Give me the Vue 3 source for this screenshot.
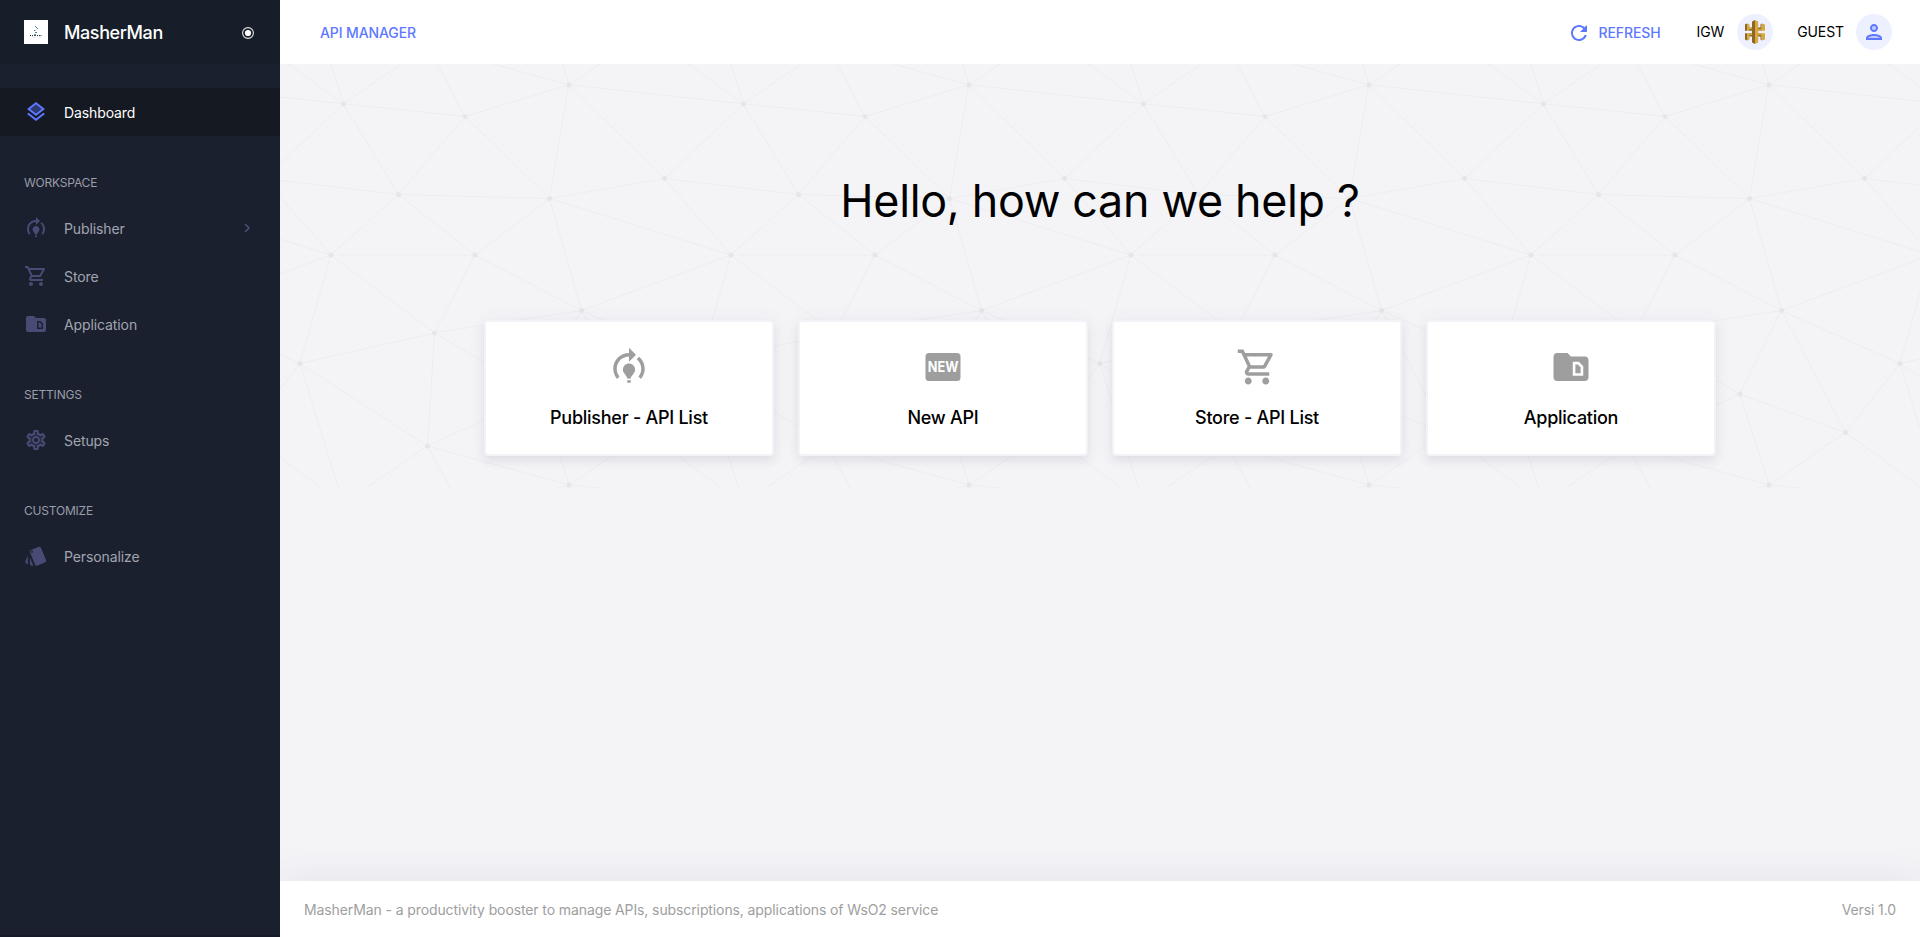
<script setup>
import { h } from 'vue'

const paths = {
  training:
    'M15.5,13.5c0,2-2.5,3.5-2.5,5h-2c0-1.5-2.5-3-2.5-5c0-1.93,1.57-3.5,3.5-3.5h0C13.93,10,15.5,11.57,15.5,13.5z M13,19.5h-2V21h2V19.5z M19,13c0,1.68-0.59,3.21-1.58,4.42l1.42,1.42C20.18,17.27,21,15.23,21,13c0-2.74-1.23-5.19-3.16-6.84l-1.42,1.42C17.99,8.86,19,10.82,19,13z M16,5l-4-4v3c-4.97,0-9,4.03-9,9c0,2.23,0.82,4.27,2.16,5.84l1.42-1.42C5.59,16.21,5,14.68,5,13c0-3.86,3.14-7,7-7v3L16,5z',
  layers:
    'M12 18.54l-7.37-5.73L3 14.07l9 7 9-7-1.63-1.27zM12 16l7.36-5.73L21 9l-9-7-9 7 1.63 1.27L12 16zm0-11.47L17.74 9 12 13.47 6.26 9 12 4.53z',
  cart:
    'M15.55 13c.75 0 1.41-.41 1.75-1.03l3.58-6.49c.37-.66-.11-1.48-.87-1.48H5.21l-.94-2H1v2h2l3.6 7.59-1.35 2.44C4.52 15.37 5.48 17 7 17h12v-2H7l1.1-2h7.45zM6.16 6h12.15l-2.76 5H8.53L6.16 6zM7 18c-1.1 0-1.99.9-1.99 2S5.9 22 7 22s2-.9 2-2-.9-2-2-2zm10 0c-1.1 0-1.99.9-1.99 2s.89 2 1.99 2 2-.9 2-2-.9-2-2-2z',
  folder:
    'M20,6h-8l-2-2H4C2.9,4,2.01,4.9,2.01,6L2,18c0,1.1,0.9,2,2,2h16c1.1,0,2-0.9,2-2V8C22,6.9,21.1,6,20,6z M17.5,12.12v3.38l-3,0v-5h1.38L17.5,12.12z M13,9v8l6,0v-5.5L16.5,9H13z',
  gear:
    'M19.43 12.98c.04-.32.07-.64.07-.98s-.03-.66-.07-.98l2.11-1.65c.19-.15.24-.42.12-.64l-2-3.46c-.09-.16-.26-.25-.44-.25-.06 0-.12.01-.17.03l-2.49 1c-.52-.4-1.08-.73-1.69-.98l-.38-2.65C14.46 2.18 14.25 2 14 2h-4c-.25 0-.46.18-.49.42l-.38 2.65c-.61.25-1.17.59-1.69.98l-2.49-1c-.06-.02-.12-.03-.18-.03-.17 0-.34.09-.43.25l-2 3.46c-.13.22-.07.49.12.64l2.11 1.65c-.04.32-.07.65-.07.98s.03.66.07.98l-2.11 1.65c-.19.15-.24.42-.12.64l2 3.46c.09.16.26.25.44.25.06 0 .12-.01.17-.03l2.49-1c.52.4 1.08.73 1.69.98l.38 2.65c.03.24.24.42.49.42h4c.25 0 .46-.18.49-.42l.38-2.65c.61-.25 1.17-.59 1.69-.98l2.49 1c.06.02.12.03.18.03.17 0 .34-.09.43-.25l2-3.46c.12-.22.07-.49-.12-.64l-2.11-1.65zm-1.98-1.71c.04.31.05.52.05.73 0 .21-.02.43-.05.73l-.14 1.13.89.7 1.08.84-.7 1.21-1.27-.51-1.04-.42-.9.68c-.43.32-.84.56-1.25.73l-1.06.43-.16 1.13-.2 1.35h-1.4l-.19-1.35-.16-1.13-1.06-.43c-.43-.18-.83-.41-1.23-.71l-.91-.7-1.06.43-1.27.51-.7-1.21 1.08-.84.89-.7-.14-1.13c-.03-.31-.05-.54-.05-.74s.02-.43.05-.73l.14-1.13-.89-.7-1.08-.84.7-1.21 1.27.51 1.04.42.9-.68c.43-.32.84-.56 1.25-.73l1.06-.43.16-1.13.2-1.35h1.39l.19 1.35.16 1.13 1.06.43c.43.18.83.41 1.23.71l.91.7 1.06-.43 1.27-.51.7 1.21-1.07.85-.89.7.14 1.13zM12 8c-2.21 0-4 1.79-4 4s1.79 4 4 4 4-1.79 4-4-1.79-4-4-4zm0 6c-1.1 0-2-.9-2-2s.9-2 2-2 2 .9 2 2-.9 2-2 2z',
  style:
    'M2.53 19.65l1.34.56v-9.03l-2.43 5.86c-.41 1.02.08 2.19 1.09 2.61zm19.5-3.7L17.07 3.98c-.31-.75-1.04-1.21-1.81-1.23-.26 0-.53.04-.79.15L7.1 5.95c-.75.31-1.21 1.03-1.23 1.8-.01.27.04.54.15.8l4.96 11.97c.31.76 1.05 1.22 1.83 1.23.26 0 .52-.05.77-.15l7.36-3.05c1.02-.42 1.51-1.59 1.09-2.6zM7.88 8.75c-.55 0-1-.45-1-1s.45-1 1-1 1 .45 1 1-.45 1-1 1zm-2 11c0 1.1.9 2 2 2h1.45l-3.45-8.34v6.34z',
}

// Translucent second tone drawn under the two-tone icons
const tones = {
  layers: 'M6.26 9L12 13.47 17.74 9 12 4.53z',
  gear: 'M12 5.2a6.8 6.8 0 1 0 0 13.6a6.8 6.8 0 1 0 0-13.6zM12 8a4 4 0 1 1 0 8a4 4 0 1 1 0-8z',
}

const MenuIcon = (props) =>
  h('svg', { viewBox: '0 0 24 24', fill: 'currentColor', 'aria-hidden': 'true' }, [
    tones[props.name] && h('path', { d: tones[props.name], opacity: 0.35 }),
    h('path', { d: paths[props.name], 'fill-rule': 'evenodd' }),
  ])
MenuIcon.props = ['name']

const sections = [
  {
    title: 'WORKSPACE',
    items: [
      { label: 'Publisher', icon: 'training', expandable: true },
      { label: 'Store', icon: 'cart' },
      { label: 'Application', icon: 'folder' },
    ],
  },
  { title: 'SETTINGS', items: [{ label: 'Setups', icon: 'gear' }] },
  { title: 'CUSTOMIZE', items: [{ label: 'Personalize', icon: 'style' }] },
]

const cards = [
  { label: 'Publisher - API List', icon: 'training' },
  { label: 'New API', icon: 'new' },
  { label: 'Store - API List', icon: 'cart' },
  { label: 'Application', icon: 'folder' },
]

const nodes = [
  [769, 229], [539, 269], [603, 493], [731, 737], [520, 660], [309, 538], [295, 764],
  [40, 599], [102, 382], [127, 80], [370, 105], [578, 42], [237, 261], [390, 382],
]
</script>

<template>
  <div class="app">
    <aside class="sidebar">
      <div class="brand">
        <svg class="logo" viewBox="0 0 24 24">
          <rect width="24" height="24" fill="#fff" />
          <g fill="#3b8f97">
            <rect x="11" y="6" width="1" height="1" />
            <rect x="12" y="7" width="1" height="1" />
            <rect x="13" y="8" width="1" height="1" />
            <rect x="10" y="10" width="1.5" height="1" />
            <rect x="11" y="12" width="2" height="1" />
          </g>
          <g fill="#26323a">
            <rect x="6" y="15" width="1" height="1" />
            <rect x="8" y="15" width="1" height="1" />
            <rect x="10" y="14.5" width="2" height="1.3" />
            <rect x="13" y="15" width="1" height="1" />
            <rect x="15" y="15" width="1" height="1" />
            <rect x="16.5" y="15" width="1" height="1" />
          </g>
          <g fill="#d9e3e4">
            <rect x="8" y="16.5" width="4" height="1" />
            <rect x="13" y="16.5" width="4" height="1" />
          </g>
        </svg>
        <span class="brand-name">MasherMan</span>
        <svg class="pin" viewBox="0 0 12 12">
          <circle cx="6" cy="6" r="5.4" fill="none" stroke="#e4e5e8" stroke-width="1.1" />
          <circle cx="6" cy="6" r="3.1" fill="#fff" />
        </svg>
      </div>

      <nav class="menu">
        <a class="item active">
          <MenuIcon class="item-icon" name="layers" />
          <span>Dashboard</span>
        </a>
        <template v-for="section in sections" :key="section.title">
          <div class="section-title">{{ section.title }}</div>
          <a v-for="item in section.items" :key="item.label" class="item">
            <MenuIcon class="item-icon" :name="item.icon" />
            <span>{{ item.label }}</span>
            <svg v-if="item.expandable" class="chevron" viewBox="0 0 6 10">
              <path d="M1 1l4 4-4 4" fill="none" stroke="currentColor" stroke-width="1.5" />
            </svg>
          </a>
        </template>
      </nav>
    </aside>

    <div class="page">
      <header class="topbar">
        <span class="title">API MANAGER</span>
        <div class="tools">
          <a class="refresh">
            <svg viewBox="0 0 24 24" fill="currentColor">
              <path d="M17.65 6.35C16.2 4.9 14.21 4 12 4c-4.42 0-7.99 3.58-7.99 8s3.57 8 7.99 8c3.73 0 6.84-2.55 7.73-6h-2.08c-.82 2.33-3.04 4-5.65 4-3.31 0-6-2.69-6-6s2.69-6 6-6c1.66 0 3.14.69 4.22 1.78L13 11h7V4l-2.35 2.35z" />
            </svg>
            <span>REFRESH</span>
          </a>
          <div class="chip igw">
            <span>IGW</span>
            <i class="avatar">
              <svg viewBox="0 0 24 24">
                <path fill="#8a6a22" d="M2 4.300L4 3.400v7.300H2zM2 13.300h2v7.200L2 19.500zM5.500 7.500H9v3.200H5.500zM5.500 13.300H9v3.200H5.500z" />
                <path fill="#d9a741" d="M4 3.400l2.500 1V7.800H9V9H6.500v1.700H4zM4 13.300h5v1.800H6.500v4.400l-2.500 1z" />
                <path fill="#8a6a22" d="M15 7.500h2.500v3.200H15zM15 13.300h2.500v3.200H15zM17.500 4.300v6.400h1.200V3.400zM17.500 13.300v6.200l1.200 1v-7.200z" />
                <path fill="#d9a741" d="M18.700 3.400L22 4.500v6.200h-7V9h3.700zM15 13.300h7v6.200l-3.300 1v-5.400H15z" />
                <path fill="#8a6a22" d="M9 1.500L12 0v24l-3-1.500z" />
                <path fill="#d9a741" d="M12 0l3.200 1.500v21L12 24z" />
              </svg>
            </i>
          </div>
          <div class="chip guest">
            <span>GUEST</span>
            <i class="avatar">
              <svg viewBox="0 0 24 24" fill="currentColor">
                <path opacity=".3" d="M12 16c-2.690 0-5.770 1.280-6 2h12c-.2-.71-3.300-2-6-2z" />
                <circle opacity=".3" cx="12" cy="8" r="2" />
                <path d="M12 14c-2.670 0-8 1.340-8 4v2h16v-2c0-2.660-5.330-4-8-4zm-6 4c.22-.72 3.310-2 6-2 2.700 0 5.800 1.290 6 2H6zm6-6c2.210 0 4-1.790 4-4s-1.790-4-4-4-4 1.790-4 4 1.790 4 4 4zm0-6c1.100 0 2 .9 2 2s-.9 2-2 2-2-.9-2-2 .9-2 2-2z" />
              </svg>
            </i>
          </div>
        </div>
      </header>

      <main class="content">
        <section class="hero">
          <svg class="backdrop" aria-hidden="true">
            <defs>
              <pattern id="constellation" width="400" height="400" patternUnits="userSpaceOnUse" viewBox="0 0 800 800">
                <g fill="none" stroke="#ededef" stroke-width="2">
                  <path d="M769 229L1037 260.9M927 880L731 737 520 660 309 538 40 599 295 764 126.5 879.5 40 599-197 493 102 382-31 229 126.5 79.5-69-63" />
                  <path d="M-31 229L237 261 390 382 603 493 308.5 537.5 101.5 381.5M370 905L295 764" />
                  <path d="M520 660L578 842 731 737 840 599 603 493 520 660 295 764 309 538 390 382 539 269 769 229 577.5 41.5 370 105 295-36 126.5 79.5 237 261 102 382 40 599-69 737 127 880" />
                  <path d="M520-140L578.5 42.5 731-63M603 493L539 269 237 261 370 105M902 382L539 269M390 382L102 382" />
                  <path d="M-222 42L126.5 79.5 370 105 539 269 577.5 41.5 927 80 769 229 902 382 603 493 731 737M295-36L577.5 41.5M578 842L295 764M40-201L127 80M102 382L-261 269" />
                </g>
                <g fill="#e6e6e8">
                  <circle v-for="([x, y], i) in nodes" :key="i" :cx="x" :cy="y" r="5" />
                </g>
              </pattern>
            </defs>
            <rect width="100%" height="100%" fill="url(#constellation)" />
          </svg>
          <h1>Hello, how can we help ?</h1>
          <div class="cards">
            <a v-for="card in cards" :key="card.label" class="card">
              <svg v-if="card.icon === 'new'" class="card-icon" viewBox="0 0 24 24">
                <rect x="2" y="4" width="20" height="16" rx="2" fill="currentColor" />
                <text class="new-text" x="3.300" y="15" textLength="17.500" lengthAdjust="spacingAndGlyphs">NEW</text>
              </svg>
              <MenuIcon v-else class="card-icon" :name="card.icon" />
              <span>{{ card.label }}</span>
            </a>
          </div>
        </section>
      </main>

      <footer class="footer">
        <span>MasherMan - a productivity booster to manage APIs, subscriptions, applications of WsO2 service</span>
        <span>Versi 1.0</span>
      </footer>
    </div>
  </div>
</template>

<style>
body {
  margin: 0;
  overflow: hidden;
}
</style>

<style scoped>
.app {
  display: flex;
  height: 100vh;
  background: #f4f4f7;
  color: #000;
  font: 400 14px/20px Inter, "Liberation Sans", sans-serif;
  letter-spacing: -0.105px;
}
.sidebar {
  position: relative;
  z-index: 2;
  flex: 0 0 280px;
  box-sizing: border-box;
  border-bottom: 2px solid #161a28;
  background: #1a202e;
}
.brand {
  display: flex;
  align-items: center;
  box-sizing: border-box;
  height: 64px;
  padding: 0 26px 0 24px;
  background: #171e29;
}
.logo {
  width: 24px;
  height: 24px;
}
.brand-name {
  margin: 1px 0 0 16px;
  color: #fff;
  font-size: 18px;
  font-weight: 500;
  letter-spacing: -0.4px;
}
.pin {
  width: 12px;
  height: 12px;
  margin: 2px 0 0 auto;
}
.menu {
  padding-top: 24px;
}
.item {
  display: flex;
  align-items: center;
  height: 48px;
  padding: 0 30px 0 24px;
  color: #a2a5b0;
}
.item span {
  margin-top: 2px;
}
.item-icon {
  width: 24px;
  height: 24px;
  margin-right: 16px;
  color: #494b74;
}
.active {
  background: #151922;
  color: #fff;
}
.active .item-icon {
  color: #5d78ff;
}
.chevron {
  width: 6px;
  height: 10px;
  margin-left: auto;
  color: #4d5078;
}
.section-title {
  box-sizing: border-box;
  height: 68px;
  padding: 36px 0 0 24px;
  color: #9a9daa;
  font-size: 12px;
  line-height: 21px;
  letter-spacing: -0.2px;
}
.page {
  display: flex;
  flex: 1;
  flex-direction: column;
  min-width: 0;
}
.topbar {
  display: flex;
  align-items: center;
  justify-content: space-between;
  flex: 0 0 64px;
  box-sizing: border-box;
  padding: 0 28px 0 40px;
  background: #fff;
}
.title {
  margin-top: 2px;
  color: #5d78ff;
  font-weight: 500;
}
.tools,
.refresh,
.chip {
  display: flex;
  align-items: center;
}
.refresh {
  gap: 8px;
  margin: 2px 36px 0 0;
  color: #5d78ff;
  font-weight: 500;
}
.refresh svg {
  width: 24px;
  height: 24px;
}
.chip {
  gap: 12px;
  color: #000;
}
.igw {
  gap: 13px;
}
.guest {
  margin-left: 24px;
}
.avatar {
  display: grid;
  place-items: center;
  width: 36px;
  height: 36px;
  border-radius: 50%;
  background: #edf0ff;
  color: #5d78ff;
}
.avatar svg {
  width: 24px;
  height: 24px;
}
.content {
  flex: 1;
}
.hero {
  position: relative;
  display: flex;
  flex-direction: column;
  align-items: center;
  box-sizing: border-box;
  height: 424px;
  padding-top: 107px;
}
.backdrop {
  position: absolute;
  inset: 0;
  width: 100%;
  height: 100%;
}
h1 {
  position: relative;
  margin: 0 0 89px;
  font-size: 44.800px;
  font-weight: 400;
  line-height: 60px;
  letter-spacing: -0.3px;
}
.cards {
  position: relative;
  display: grid;
  grid-template-columns: repeat(4, 290px);
  gap: 24px;
}
.card {
  display: flex;
  flex-direction: column;
  align-items: center;
  box-sizing: border-box;
  height: 136px;
  padding-top: 24px;
  border: 2px solid #f3f2f7;
  border-radius: 4px;
  background: #fff;
  box-shadow: 0 0 20px rgba(82, 63, 105, 0.05), 0 5px 10px rgba(82, 63, 105, 0.09);
  font-size: 18px;
  font-weight: 500;
  letter-spacing: -0.26px;
}
.card-icon {
  width: 42px;
  height: 42px;
  margin-bottom: 20px;
  color: #9e9e9e;
}
.new-text {
  fill: #fff;
  font: 700 8px Inter, sans-serif;
  letter-spacing: 0;
}
.footer {
  display: flex;
  align-items: center;
  justify-content: space-between;
  flex: 0 0 56px;
  box-sizing: border-box;
  padding: 2px 24px 0;
  background: #fff;
  box-shadow: 0 0 40px rgba(82, 63, 105, 0.1);
  color: #9e9e9e;
}
</style>
